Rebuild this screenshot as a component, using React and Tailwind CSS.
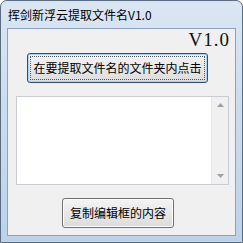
import React from "react";

const cjk = { fontFamily: '"Noto Sans CJK SC", "Liberation Sans", sans-serif' };

const App = () => {
  return (
    <div className="w-[243px] h-[243px] bg-white">
      {/* Window frame */}
      <div className="w-[243px] h-[243px] flex flex-col rounded-t-[7px] border border-[#5b6b80] bg-gradient-to-b from-[#dbe6f3] via-[#c9dbef] to-[#bcd2ec] overflow-hidden">
        {/* Title bar */}
        <div
          className="h-[27px] flex items-center pl-[7px] pt-[1px] text-[12px] text-black leading-none"
          style={cjk}
        >
          挥剑新浮云提取文件名V1.0
        </div>

        {/* Client area */}
        <div className="mx-[6px] mb-[6px] flex-1 border border-[#8da2bb] bg-[#f0f0f0] flex flex-col">
          {/* Version label */}
          <div className="flex justify-end pr-[5px] pt-[1px] h-[20px]">
            <span
              className="text-[19px] leading-[19px] tracking-[1px] text-[#111]"
              style={{ fontFamily: '"Liberation Serif", "DejaVu Serif", serif' }}
            >
              V1.0
            </span>
          </div>

          {/* Main button (focused) */}
          <button
            className="ml-[19px] mt-[4px] w-[181px] h-[30px] rounded-[3px] border border-[#2c4f7e] bg-gradient-to-b from-[#f4f4f4] to-[#dcdcdc] p-[2px] shadow-[inset_0_0_0_1px_#a9d3f2]"
            style={cjk}
          >
            <div className="w-full h-full border border-dotted border-[#555] flex items-center justify-center text-[12px] text-black leading-none">
              在要提取文件名的文件夹内点击
            </div>
          </button>

          {/* Edit box with scrollbar */}
          <div className="ml-[8px] mt-[13px] w-[213px] h-[89px] border border-[#c9ccd2] bg-white flex">
            <div className="flex-1" />
            <div className="w-[17px] bg-[#f0f0f0] border-l border-[#e6e6e6] flex flex-col justify-between items-center py-[6px]">
              <svg width="7" height="4" viewBox="0 0 7 4">
                <path d="M0 4 L3.5 0 L7 4 Z" fill="#a0a0a0" />
              </svg>
              <svg width="7" height="4" viewBox="0 0 7 4">
                <path d="M0 0 L3.5 4 L7 0 Z" fill="#a0a0a0" />
              </svg>
            </div>
          </div>

          {/* Copy button */}
          <button
            className="ml-[54px] mt-[13px] w-[112px] h-[30px] rounded-[3px] border border-[#707070] bg-gradient-to-b from-[#f4f4f4] to-[#dcdcdc] shadow-[inset_0_0_0_1px_#fcfcfc] flex items-center justify-center text-[12px] text-black leading-none"
            style={cjk}
          >
            复制编辑框的内容
          </button>
        </div>
      </div>
    </div>
  );
};

export default App;
